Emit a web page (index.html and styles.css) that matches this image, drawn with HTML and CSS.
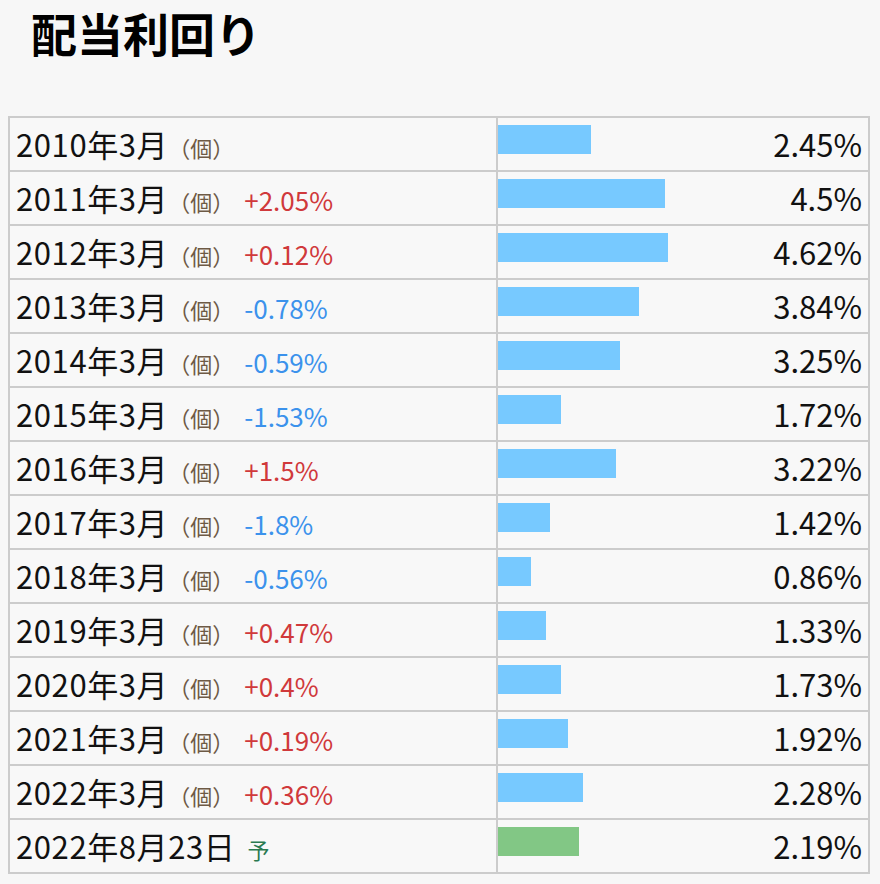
FILE: index.html
```html
<!DOCTYPE html>
<html lang="ja">
<head>
<meta charset="utf-8">
<title>配当利回り</title>
<link rel="stylesheet" href="styles.css">
</head>
<body>
<h1 class="title">配当利回り</h1>
<div class="yield-table">
  <div class="row"><div class="label"><span class="period">2010年3月</span><span class="unit">（個）</span></div><div class="data"><span class="bar" style="width:93px"></span><span class="value">2.45%</span></div></div>
  <div class="row"><div class="label"><span class="period">2011年3月</span><span class="unit">（個）</span><span class="chg up">+2.05%</span></div><div class="data"><span class="bar" style="width:167px"></span><span class="value">4.5%</span></div></div>
  <div class="row"><div class="label"><span class="period">2012年3月</span><span class="unit">（個）</span><span class="chg up">+0.12%</span></div><div class="data"><span class="bar" style="width:170px"></span><span class="value">4.62%</span></div></div>
  <div class="row"><div class="label"><span class="period">2013年3月</span><span class="unit">（個）</span><span class="chg down">-0.78%</span></div><div class="data"><span class="bar" style="width:141px"></span><span class="value">3.84%</span></div></div>
  <div class="row"><div class="label"><span class="period">2014年3月</span><span class="unit">（個）</span><span class="chg down">-0.59%</span></div><div class="data"><span class="bar" style="width:122px"></span><span class="value">3.25%</span></div></div>
  <div class="row"><div class="label"><span class="period">2015年3月</span><span class="unit">（個）</span><span class="chg down">-1.53%</span></div><div class="data"><span class="bar" style="width:63px"></span><span class="value">1.72%</span></div></div>
  <div class="row"><div class="label"><span class="period">2016年3月</span><span class="unit">（個）</span><span class="chg up">+1.5%</span></div><div class="data"><span class="bar" style="width:118px"></span><span class="value">3.22%</span></div></div>
  <div class="row"><div class="label"><span class="period">2017年3月</span><span class="unit">（個）</span><span class="chg down">-1.8%</span></div><div class="data"><span class="bar" style="width:52px"></span><span class="value">1.42%</span></div></div>
  <div class="row"><div class="label"><span class="period">2018年3月</span><span class="unit">（個）</span><span class="chg down">-0.56%</span></div><div class="data"><span class="bar" style="width:33px"></span><span class="value">0.86%</span></div></div>
  <div class="row"><div class="label"><span class="period">2019年3月</span><span class="unit">（個）</span><span class="chg up">+0.47%</span></div><div class="data"><span class="bar" style="width:48px"></span><span class="value">1.33%</span></div></div>
  <div class="row"><div class="label"><span class="period">2020年3月</span><span class="unit">（個）</span><span class="chg up">+0.4%</span></div><div class="data"><span class="bar" style="width:63px"></span><span class="value">1.73%</span></div></div>
  <div class="row"><div class="label"><span class="period">2021年3月</span><span class="unit">（個）</span><span class="chg up">+0.19%</span></div><div class="data"><span class="bar" style="width:70px"></span><span class="value">1.92%</span></div></div>
  <div class="row"><div class="label"><span class="period">2022年3月</span><span class="unit">（個）</span><span class="chg up">+0.36%</span></div><div class="data"><span class="bar" style="width:85px"></span><span class="value">2.28%</span></div></div>
  <div class="row"><div class="label"><span class="period">2022年8月23日</span><span class="forecast">予</span></div><div class="data"><span class="bar bar-forecast" style="width:81px"></span><span class="value">2.19%</span></div></div>
</div>
</body>
</html>
```

FILE: styles.css
```css
html, body {
  margin: 0;
  padding: 0;
  background: #f7f7f7;
}

body {
  font-family: "Noto Sans CJK JP", "Noto Sans", sans-serif;
  color: #111;
}

.title {
  margin: 0;
  padding-left: 31px;
  font-size: 46px;
  font-weight: 700;
  line-height: 64px;
  color: #000;
}

.yield-table {
  margin: 52px 0 0 8px;
  width: 858px;
  border: 2px solid #cccccc;
  background: #f8f8f8;
}

.row {
  display: grid;
  grid-template-columns: 488px 1fr;
  height: 52px;
  border-top: 2px solid #cccccc;
}

.row:first-child {
  border-top: none;
}

.label {
  display: flex;
  align-items: baseline;
  padding-left: 6px;
  border-right: 2px solid #cccccc;
  line-height: 52px;
  white-space: nowrap;
}

.period {
  font-size: 31px;
  letter-spacing: 0.6px;
  color: #111;
}

.unit {
  font-size: 22px;
  color: #6e5a45;
}

.chg {
  font-size: 26px;
  margin-left: 10px;
}

.up { color: #d0393b; }
.down { color: #3b92ec; }

.forecast {
  font-size: 22px;
  color: #2a7a50;
  margin-left: 12px;
}

.data {
  display: flex;
  justify-content: space-between;
  align-items: flex-start;
  padding-right: 6px;
}

.bar {
  display: block;
  height: 29px;
  margin-top: 7px;
  background: #77c9ff;
}

.bar-forecast {
  background: #82c785;
}

.value {
  font-size: 31px;
  line-height: 52px;
  color: #111;
}
```
